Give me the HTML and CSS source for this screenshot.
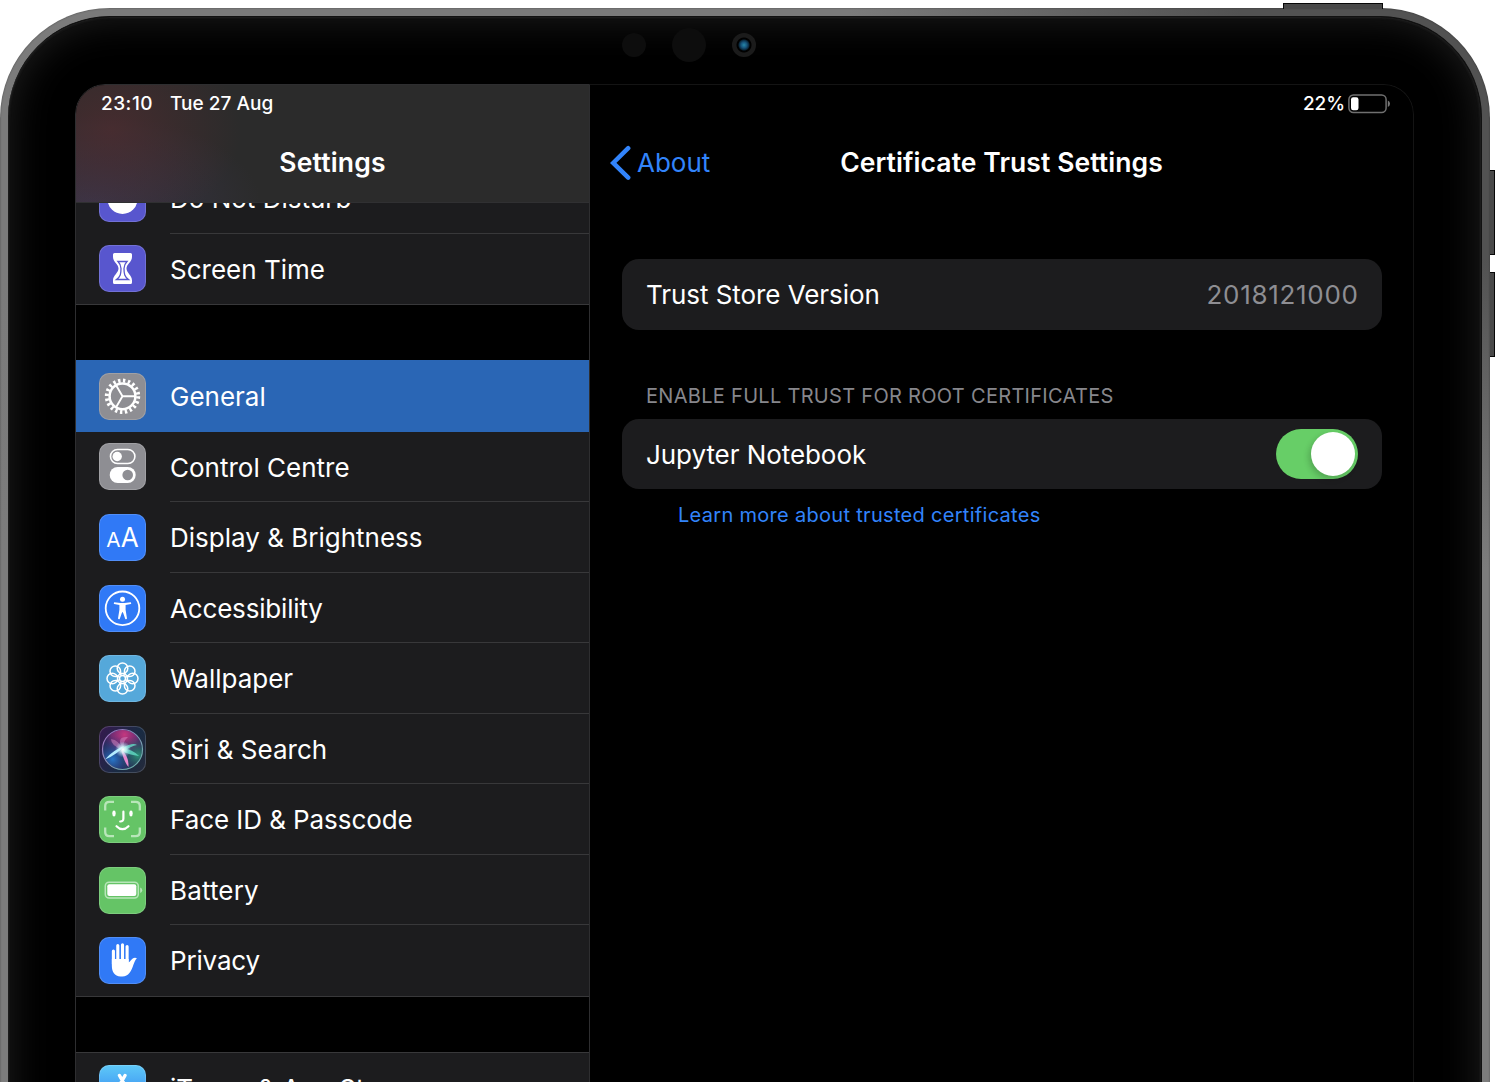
FILE: index.html
```html
<!DOCTYPE html>
<html lang="en">
<head>
<meta charset="utf-8">
<title>Settings</title>
<link rel="stylesheet" href="styles.css">
</head>
<body>
<div class="device">
  <i class="button button-power"></i>
  <i class="button button-up"></i>
  <i class="button button-down"></i>
  <div class="bezel">
    <div class="sensors"><i class="sensor"></i><i class="sensor sensor-large"></i><i class="camera"></i></div>
    <div class="screen">
      <aside class="sidebar">
        <header class="sidebar-header">
          <div class="status"><span class="time">23:10</span><span class="date">Tue 27 Aug</span></div>
          <h1 class="title sidebar-title">Settings</h1>
        </header>
        <div class="scroller">
          <ul class="group group-first">
            <li class="row">
              <svg class="icon indigo" viewBox="0 0 47 47"><circle cx="23.5" cy="24" r="15" fill="#fff"/></svg>
              <span class="label dnd">Do Not Disturb</span>
            </li>
            <li class="row">
              <svg class="icon indigo" viewBox="0 0 47 47"><path fill="#fff" d="M15.500 8H31.500Q33 8 33 9.500V12C33 17 27.500 19 27.500 23.500S33 30 33 35.500V37.500Q33 39 31.500 39H15.500Q14 39 14 37.500V35.500C14 30 19.500 28 19.500 23.500S14 17 14 12V9.500Q14 8 15.500 8Z"/><path fill="none" stroke="#5856ce" stroke-width="1.300" d="M19 16.500H28C26 18.500 25 20 25 23.500C25 29 25.500 31.500 29.500 34.500H17.500C21.500 31.500 22 29 22 23.500C22 20 21 18.500 19 16.500Z"/></svg>
              <span class="label screentime">Screen Time</span>
            </li>
          </ul>
          <ul class="group">
            <li class="row selected">
              <svg class="icon gray" viewBox="0 0 47 47"><g fill="none" stroke="#fff"><circle cx="23.500" cy="23.300" r="12.900" stroke-width="2.500"/><circle cx="23.500" cy="23.300" r="15.700" stroke-width="4" stroke-dasharray="2.400 2.532"/><path stroke-width="1.900" d="M23.500 23.300H36M23.500 23.300L17.200 12.500M23.500 23.300L17.200 34.100"/></g></svg>
              <span class="label general">General</span>
            </li>
            <li class="row">
              <svg class="icon gray" viewBox="0 0 47 47"><rect x="11.500" y="6.500" width="24.400" height="14" rx="7" fill="none" stroke="#fff" stroke-width="1.600"/><circle cx="18.200" cy="13.500" r="4.700" fill="#fff"/><rect x="10.700" y="24" width="26" height="16" rx="8" fill="#fff"/><circle cx="28.700" cy="32" r="5.300" fill="#8e8e93"/></svg>
              <span class="label control">Control Centre</span>
            </li>
            <li class="row">
              <svg class="icon blue" viewBox="0 0 47 47"><text class="glyph" x="7.300" y="33.300" font-size="20.500" textLength="14.300" lengthAdjust="spacingAndGlyphs">A</text><text class="glyph" x="21.700" y="33.300" font-size="26.500" textLength="18" lengthAdjust="spacingAndGlyphs">A</text></svg>
              <span class="label display">Display &amp; Brightness</span>
            </li>
            <li class="row">
              <svg class="icon blue" viewBox="0 0 47 47"><circle cx="23.500" cy="23.300" r="16.800" fill="none" stroke="#fff" stroke-width="1.800"/><circle cx="23.500" cy="14.200" r="2.500" fill="#fff"/><path fill="#fff" d="M15.200 17.300L21.500 18.100H25.500L31.800 17.300Q32.800 18.400 31.800 19L26.600 19.900V24.800L28 33.500Q27.400 34.800 26.300 34L23.900 27.200H23.100L20.700 34Q19.600 34.800 19 33.500L20.400 24.800V19.900L15.200 19Q14.200 18.400 15.200 17.300Z"/></svg>
              <span class="label access">Accessibility</span>
            </li>
            <li class="row">
              <svg class="icon sky" viewBox="0 0 47 47"><g fill="none" stroke="#fff" stroke-width="1.500"><circle cx="33.700" cy="23.500" r="5.300"/><circle cx="30.700" cy="30.700" r="5.300"/><circle cx="23.500" cy="33.700" r="5.300"/><circle cx="16.300" cy="30.700" r="5.300"/><circle cx="13.300" cy="23.500" r="5.300"/><circle cx="16.300" cy="16.300" r="5.300"/><circle cx="23.500" cy="13.300" r="5.300"/><circle cx="30.700" cy="16.300" r="5.300"/><circle cx="23.500" cy="23.500" r="3"/><path d="M24.600 20.800L26.200 17M26.200 22.400L30 20.800M26.200 24.600L30 26.200M24.600 26.200L26.200 30M22.400 26.200L20.800 30M20.800 24.600L17 26.200M20.800 22.400L17 20.800M22.400 20.800L20.800 17"/></g></svg>
              <span class="label wallpaper">Wallpaper</span>
            </li>
            <li class="row">
              <svg class="icon siri" viewBox="0 0 47 47">
                <defs>
                  <radialGradient id="orb-pink" cx=".55" cy=".12" r=".6"><stop offset="0" stop-color="#c5387f"/><stop offset=".55" stop-color="#862e7c" stop-opacity=".8"/><stop offset="1" stop-color="#4a2870" stop-opacity="0"/></radialGradient>
                  <radialGradient id="orb-blue" cx=".25" cy=".75" r=".6"><stop offset="0" stop-color="#2877c9"/><stop offset="1" stop-color="#223672" stop-opacity="0"/></radialGradient>
                  <radialGradient id="orb-green" cx=".9" cy=".65" r=".5"><stop offset="0" stop-color="#2c9176"/><stop offset="1" stop-color="#245160" stop-opacity="0"/></radialGradient>
                  <radialGradient id="orb-core"><stop offset="0" stop-color="#fff"/><stop offset=".4" stop-color="#d9ffff" stop-opacity=".75"/><stop offset="1" stop-color="#a9e6ff" stop-opacity="0"/></radialGradient>
                  <linearGradient id="orb-ring" x2="1" y2="1"><stop stop-color="#a26bc5"/><stop offset="1" stop-color="#63b8a6"/></linearGradient>
                </defs>
                <circle cx="23.500" cy="23.500" r="19.500" fill="#27234f"/><circle cx="23.500" cy="23.500" r="19.500" fill="url(#orb-pink)"/><circle cx="23.500" cy="23.500" r="19.500" fill="url(#orb-blue)"/><circle cx="23.500" cy="23.500" r="19.500" fill="url(#orb-green)"/>
                <path fill="#d789c4" opacity=".5" d="M24 24Q12 20 12 13Q20 14 24 24ZM23 22Q17 10 29 11Q23 16 25 24Z"/>
                <path fill="#62dfc6" opacity=".8" d="M23 22Q34 16 38 19Q32 20 24 26ZM23 22Q33 23 40 30Q30 29 23 25Z"/>
                <path fill="#b4ecff" d="M25 20Q19 28 6 33.500Q14 24 25 20Z"/>
                <path fill="#e889cf" d="M22 23Q30 30 29.500 41Q25 36 22 23Z"/>
                <circle cx="24" cy="23.500" r="8" fill="url(#orb-core)"/>
                <circle cx="23.500" cy="23.500" r="20" fill="none" stroke="url(#orb-ring)" stroke-width="1.200"/>
              </svg>
              <span class="label siri-label">Siri &amp; Search</span>
            </li>
            <li class="row">
              <svg class="icon green" viewBox="0 0 47 47"><path fill="none" stroke="#b8e6b9" stroke-width="2.300" d="M6.200 14.500V10Q6.200 5.800 10.400 5.800H15M32 5.800H36.600Q40.800 5.800 40.800 10V14.500M40.800 31.500V36Q40.800 40.200 36.600 40.200H32M15 40.200H10.400Q6.200 40.200 6.200 36V31.500"/><ellipse cx="15" cy="17.500" rx="1.700" ry="2.900" fill="#fff"/><ellipse cx="32" cy="17.500" rx="1.700" ry="2.900" fill="#fff"/><path fill="none" stroke="#fff" stroke-width="2.200" stroke-linecap="round" d="M24.400 15.700V22.500Q24.400 25.600 21.200 25.500M17.500 30.200Q23.500 36.200 29.500 30.200"/></svg>
              <span class="label faceid">Face ID &amp; Passcode</span>
            </li>
            <li class="row">
              <svg class="icon green" viewBox="0 0 47 47"><rect x="6.300" y="15.200" width="33" height="15.900" rx="3.800" fill="none" stroke="#b8e6b9" stroke-width="1.500"/><rect x="8.300" y="17.200" width="29" height="11.900" rx="2" fill="#fff"/><path d="M41.200 20.500Q43.200 21 43.200 23.200T41.200 26Z" fill="#b8e6b9"/></svg>
              <span class="label battery-label">Battery</span>
            </li>
            <li class="row">
              <svg class="icon blue" viewBox="0 0 47 47"><g fill="none" stroke="#fff" stroke-linecap="round" stroke-width="3.100"><path d="M14.400 14V27M18.800 8.500V26M23.500 7.700V26M28.100 9.500V26"/></g><path fill="#fff" d="M12.850 22H29.650V25.500C31 24.800 32 23 33.400 21.800C34.800 20.600 36.600 20.500 37.900 21.300C36.300 22.900 35.500 25 34.500 27.500C32.300 34.500 29.500 39.400 23.500 39.400H21.500C15.500 39.400 12.850 34.500 12.850 29Z"/></svg>
              <span class="label privacy">Privacy</span>
            </li>
          </ul>
          <ul class="group">
            <li class="row">
              <svg class="icon store" viewBox="0 0 47 47"><path fill="none" stroke="#fff" stroke-width="3.400" stroke-linecap="round" d="M20.500 10.500L32 31M26 10.500L14.500 31M11 26H36"/></svg>
              <span class="label store-label">iTunes &amp; App Store</span>
            </li>
          </ul>
        </div>
      </aside>
      <main class="pane">
        <div class="status status-right"><span class="percent">22%</span><svg class="battery" viewBox="0 0 43 20"><rect x=".9" y=".9" width="37.200" height="17.700" rx="4.500" fill="none" stroke="#707070" stroke-width="1.500"/><rect x="3" y="3.300" width="7.500" height="13" rx="2.200" fill="#fff"/><path fill="#777" d="M39.800 6.500Q42 7.500 42 9.700T39.800 13Z"/></svg></div>
        <nav class="navbar">
          <a class="back"><svg class="chevron" viewBox="0 0 22 36"><path d="M18.200 3.200L3.200 17.900L18.200 32.600" fill="none" stroke="#3284fb" stroke-width="4.500" stroke-linecap="round"/></svg><span class="about">About</span></a>
          <h2 class="title pane-title">Certificate Trust Settings</h2>
        </nav>
        <section class="content">
          <div class="card"><span class="trust">Trust Store Version</span><span class="value">2018121000</span></div>
          <h3 class="section-title">ENABLE FULL TRUST FOR ROOT CERTIFICATES</h3>
          <div class="card"><span class="jupyter">Jupyter Notebook</span><span class="toggle"><i class="knob"></i></span></div>
          <a class="learn">Learn more about trusted certificates</a>
        </section>
      </main>
    </div>
  </div>
</div>
</body>
</html>
```
FILE: styles.css
```css
* { box-sizing: border-box; }
html { height: 1082px; overflow: hidden; }
body { margin: 0; height: 1082px; padding-top: 8px; overflow: hidden; background: #fff; color: #fff; font-family: Inter, "Liberation Sans", sans-serif; white-space: nowrap; }
h1, h2, h3, ul { margin: 0; padding: 0; font-weight: 400; list-style: none; }
i { display: block; }

.device { position: relative; width: 1490px; height: 1280px; padding: 8px; border-radius: 110px; background: linear-gradient(to bottom, transparent 250px, #7c7c7c 560px), linear-gradient(to right, #7b7b7b 850px, #525252 1240px); box-shadow: inset 0 0 2px rgba(0,0,0,.45); }
.bezel { position: relative; height: 1264px; padding: 0 68px 0 67px; border-radius: 102px; border: 1px solid #111; border-width: 1px 1px 0 0; background: #000; box-shadow: inset 0 0 3px #333, inset 0 0 42px rgba(255,255,255,.13); }
.button { position: absolute; background: #494949; border: 1px solid #080808; }
.button-power { left: 1283px; top: -5px; width: 100px; height: 6px; border-bottom: 0; }
.button-up, .button-down { left: 1490px; width: 5px; height: 85px; border-left: 0; }
.button-up { top: 162px; }
.button-down { top: 264px; }

.sensors { display: flex; align-items: center; height: 67px; padding: 0 0 11px 547px; }
.sensor { width: 24px; height: 24px; border-radius: 50%; background: #0d0d0d; }
.sensor-large { width: 34px; height: 34px; margin: 0 26px; }
.camera { width: 24px; height: 24px; border-radius: 50%; background: radial-gradient(circle, #2688a8 0, #16527a 3px, #0a273a 5px, #000 6px, #000 7px, #1b1b1b 8px); }

.screen { display: flex; width: 1339px; height: 1180px; overflow: hidden; border-radius: 30px; background: #000; }
.sidebar { display: flex; flex: none; flex-direction: column; width: 515px; border: 1px solid #2e2e30; border-radius: 30px 0 0; overflow: hidden; }
.sidebar-header { height: 118px; flex: none; border-bottom: 1px solid #303032; background: radial-gradient(ellipse 130px 100px at 35px 45px, rgba(84,44,48,.65), transparent), radial-gradient(ellipse 170px 90px at 15px 119px, rgba(64,58,88,.65), transparent), #2b2b2b; }
.status { display: flex; align-items: center; height: 36px; padding-left: 25px; font-size: 19px; font-weight: 500; }
.time { letter-spacing: .5px; }
.date { margin-left: 17px; letter-spacing: .03px; }
.title { font-size: 26.500px; font-weight: 600; text-align: center; line-height: 42px; }
.sidebar-title { margin-top: 20px; letter-spacing: .18px; }
.pane-title { margin-bottom: 2px; letter-spacing: .08px; }

.scroller { flex: 1; overflow: hidden; }
.group { margin-bottom: 55px; border: solid #38383a; border-width: 1px 0; background: #1c1c1e; }
.group-first { margin-top: -41px; }
.row { display: flex; height: 70.550px; padding-left: 23px; align-items: center; }
.icon { flex: none; width: 47px; height: 47px; margin-right: 24px; border-radius: 10px; box-shadow: inset 0 0 0 1px rgba(255,255,255,.16); }
.indigo { background: #5856ce; }
.gray { background: #8e8e93; }
.blue { background: #3079f6; }
.sky { background: #55a8da; }
.green { background: #65c466; }
.siri { background: linear-gradient(120deg, #36194f, #192b43 60%, #252a3b); }
.store { background: linear-gradient(#5ec9f8, #2872ee); }
.glyph { fill: #fff; font-family: Inter, sans-serif; }
.label { flex: 1; height: 100%; font-size: 26px; line-height: 72.500px; border-bottom: 1px solid #38383a; }
.access, .privacy { letter-spacing: -.17px; }
.faceid { letter-spacing: -.07px; }
.battery-label { letter-spacing: .15px; }
.row:last-child .label { border: 0; }
.selected { background: #2a66b5; box-shadow: 0 -1px #2a66b5; }
.selected .label { border: 0; }

.pane { flex: 1; border: solid #141414; border-width: 1px 1px 0 0; border-radius: 0 30px 0 0; }
.status-right { justify-content: flex-end; height: 36px; padding-right: 22px; }
.battery { width: 43px; height: 20px; margin: 1px 0 0 3px; }
.percent { letter-spacing: -.1px; }
.navbar { display: grid; grid-template-columns: 120px 1fr 120px; height: 83px; padding: 0 20px; align-items: center; }
.back { display: flex; align-items: center; color: #3284fb; font-size: 26px; }
.chevron { flex: none; width: 22px; height: 36px; margin-right: 5px; }
.content { display: flex; flex-direction: column; padding: 55px 31px 0 32px; }
.card { display: flex; height: 70.500px; padding: 0 24px; align-items: center; justify-content: space-between; border-radius: 17px; background: #1c1c1e; font-size: 26px; }
.trust, .jupyter { letter-spacing: -.06px; }
.jupyter { padding-top: 1px; }
.value { margin-right: -.7px; color: #8e8e93; letter-spacing: .7px; }
.section-title { height: 89px; padding: 53px 24px 0; color: #87878c; font-size: 20px; line-height: 27px; letter-spacing: .3px; }
.toggle { display: flex; width: 82px; height: 50px; padding: 3px; justify-content: flex-end; border-radius: 25px; background: #67ce67; }
.knob { width: 44px; height: 44px; border-radius: 50%; background: #fff; box-shadow: -2px 3px 6px rgba(0,0,0,.2); }
.learn { margin: 13px 56px; color: #3284fb; font-size: 20px; line-height: 27px; letter-spacing: .3px; }
```
